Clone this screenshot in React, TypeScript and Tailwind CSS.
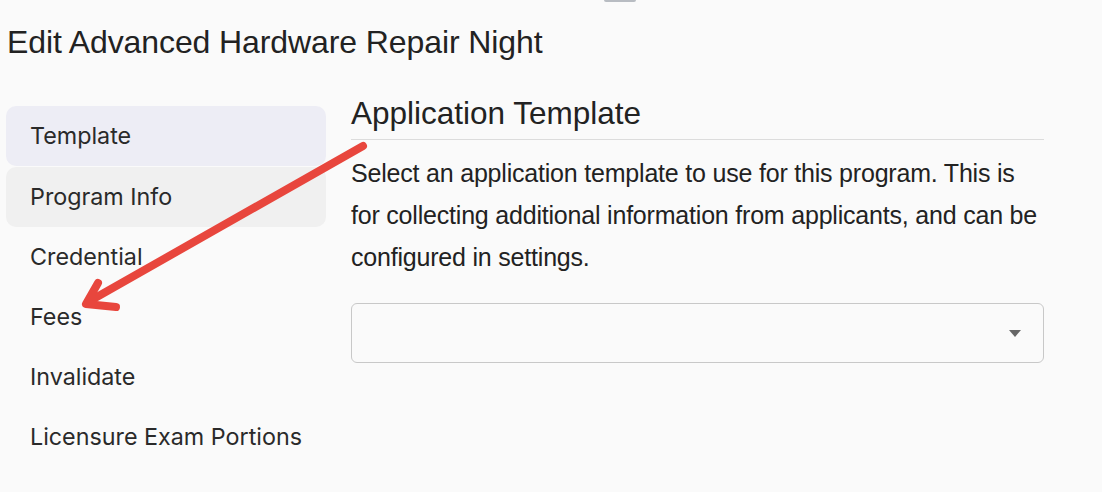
// App.tsx — "Edit program" screen with a sidebar of sections and the template picker
const sections = ["Template", "Program Info", "Credential", "Fees", "Invalidate", "Licensure Exam Portions"];

export default function App() {
  return (
    <div className="relative w-[1102px] h-[492px] overflow-hidden bg-[#fafafa] text-[#222]" style={{ fontFamily: "'Liberation Sans', Arial, sans-serif" }}>
      <div className="absolute left-[604px] top-0 w-[32px] h-[2px] rounded-b bg-[#b8bcc2]" />
      <h1 className="pl-[7px] pt-[24px] text-[32px] leading-[36px] tracking-[-0.1px]">Edit Advanced Hardware Repair Night</h1>

      <div className="flex pt-[46px]">
        <nav className="ml-[6px] w-[320px] shrink-0 flex flex-col" style={{ fontFamily: "Inter, 'Noto Sans', sans-serif" }}>
          {sections.map((s, i) => (
            <div
              key={s}
              className={`h-[60px] flex items-center pl-[24px] text-[23.3px] text-[#2a2a2a] rounded-[10px] ${i === 0 ? "bg-[#ededf5]" : i === 1 ? "bg-[#f0f0f0] mt-px" : ""}`}
            >
              {s}
            </div>
          ))}
        </nav>

        <main className="ml-[25px] w-[693px] shrink-0">
          <h2 className="text-[31.5px] leading-[34px] -mt-[10px] pb-[9px]">Application Template</h2>
          <div className="h-px bg-[#dcdcdc]" />
          <p className="mt-[12px] text-[25px] leading-[42px] text-[#222] tracking-[-0.2px]">
            Select an application template to use for this program. This is for collecting additional information from applicants, and can be configured in settings.
          </p>
          <div className="mt-[25px] h-[60px] rounded-[6px] border border-[#c8c8c8] bg-[#fafafa] flex items-center justify-end pr-[22px]">
            <svg width="12" height="7" viewBox="0 0 12 7"><path d="M0 0h12L6 7z" fill="#666" /></svg>
          </div>
        </main>
      </div>

      {/* red annotation arrow */}
      <svg className="absolute left-0 top-0 pointer-events-none" width="1102" height="492">
        <g stroke="#e8463d" strokeWidth="8" strokeLinecap="round" strokeLinejoin="round" fill="none">
          <path d="M363 146 L88 302" />
          <path d="M98 283 L86 304 L116 307" />
        </g>
      </svg>
    </div>
  );
}
